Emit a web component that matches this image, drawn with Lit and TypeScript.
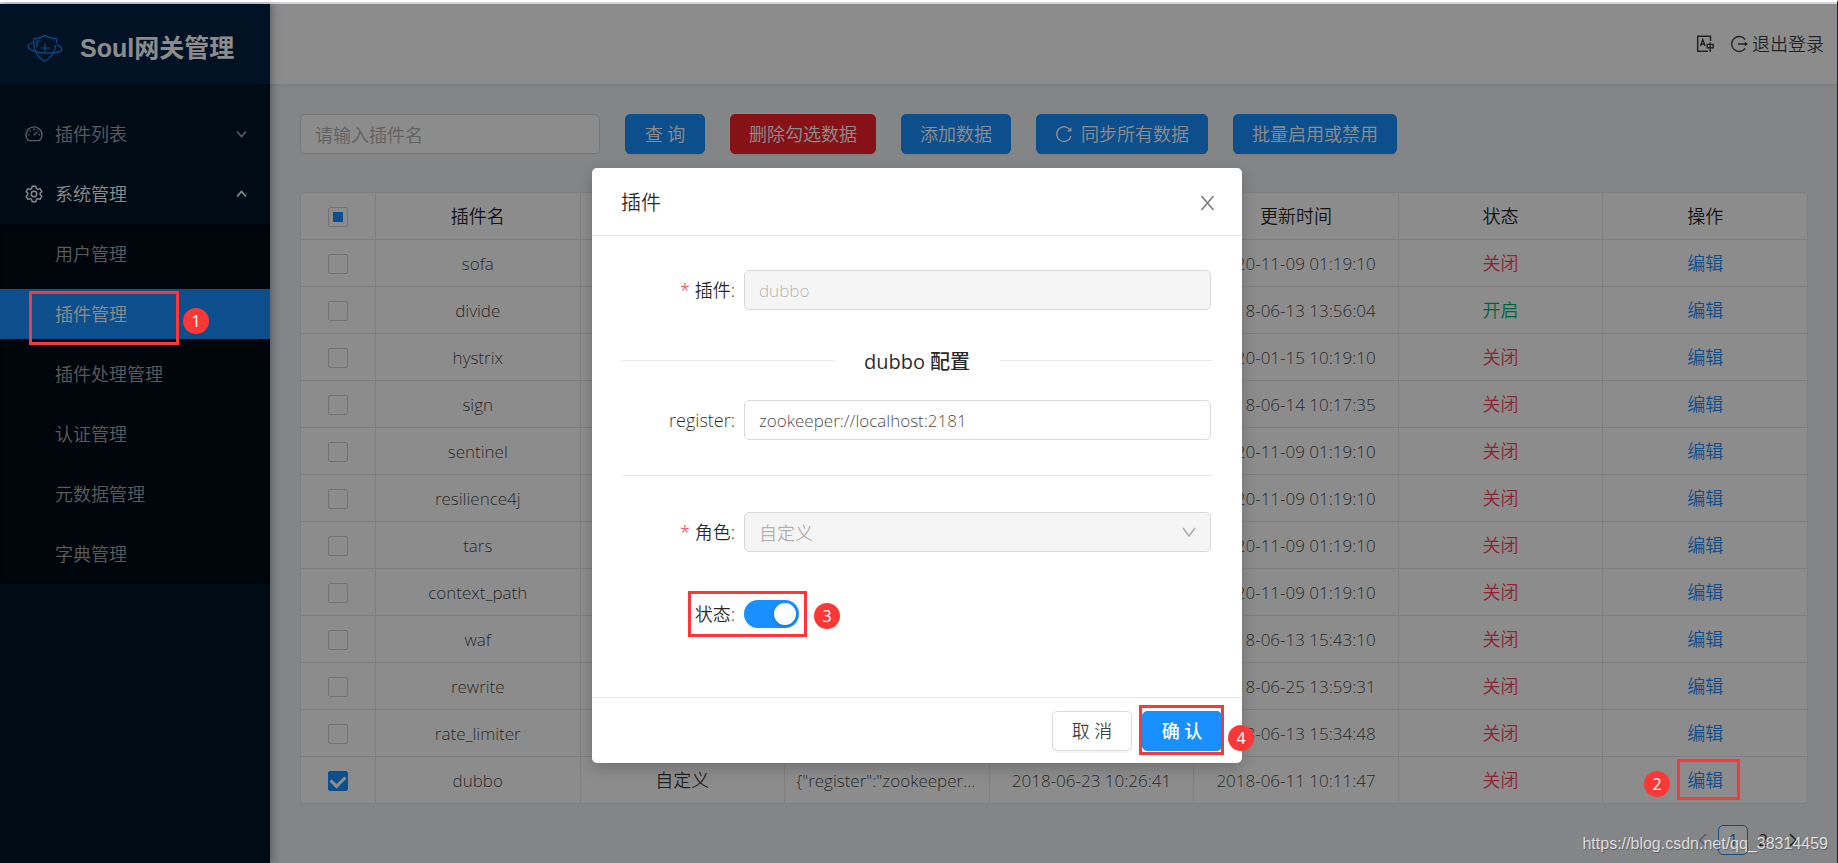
import { LitElement, html, css, svg, nothing } from "lit";
import { customElement } from "lit/decorators.js";

interface Plugin {
  name: string;
  role?: string;
  config?: string;
  created?: string;
  updated: string;
  enabled?: boolean;
  checked?: boolean;
}

const PLUGINS: Plugin[] = [
  { name: "sofa", updated: "2020-11-09 01:19:10" },
  { name: "divide", updated: "2018-06-13 13:56:04", enabled: true },
  { name: "hystrix", updated: "2020-01-15 10:19:10" },
  { name: "sign", updated: "2018-06-14 10:17:35" },
  { name: "sentinel", updated: "2020-11-09 01:19:10" },
  { name: "resilience4j", updated: "2020-11-09 01:19:10" },
  { name: "tars", updated: "2020-11-09 01:19:10" },
  { name: "context_path", updated: "2020-11-09 01:19:10" },
  { name: "waf", updated: "2018-06-13 15:43:10" },
  { name: "rewrite", updated: "2018-06-25 13:59:31" },
  { name: "rate_limiter", updated: "2018-06-13 15:34:48" },
  {
    name: "dubbo",
    role: "自定义",
    config: '{"register":"zookeeper://localhost:2181"}',
    created: "2018-06-23 10:26:41",
    updated: "2018-06-11 10:11:47",
    checked: true,
  },
];

const COLUMNS = ["插件名", "角色", "配置", "创建时间", "更新时间", "状态", "操作"];
const SYSTEM_MENU = ["用户管理", "插件管理", "插件处理管理", "认证管理", "元数据管理", "字典管理"];

const icon = (body: unknown, cls = "icon", box = "0 0 18 18") =>
  html`<svg class=${cls} viewBox=${box} fill="none" stroke="currentColor" aria-hidden="true">${body}</svg>`;

const dashboardIcon = icon(svg`
  <path stroke-width="1.4" d="M3.4 15.6A8 8 0 1 1 14.6 15.6Z"/>
  <path stroke-width="1.3" d="M8.6 10.4 12 7M9 3.6v1.8M4.6 5.4l1.2 1.2M2.9 9.8h1.7M13.4 9.8h1.7M13.2 5.2l-.6.6"/>`);
const gearIcon = icon(svg`
  <path stroke-width="1.4" stroke-linejoin="round" d="M7.2 1.2h3.6l.5 2.2 1.5.9 2.2-.7 1.8 3.1-1.7 1.5v1.6l1.7 1.5-1.8 3.1-2.2-.7-1.5.9-.5 2.2H7.2l-.5-2.2-1.5-.9-2.2.7-1.8-3.1 1.7-1.5V8.2L1.2 6.7l1.8-3.1 2.2.7 1.5-.9Z"/>
  <circle stroke-width="1.4" cx="9" cy="9" r="2.7"/>`);
const logoIcon = icon(svg`
  <path stroke-width="1.2" d="M17.500 1.200C15 3.500 11 4.500 6.800 4.800c-.3 9.700 1.500 17.200 10.900 22.400 6.700-3.800 10.400-9.600 11-16M29.600 9V4.800C25 4.500 20.500 3.500 17.500 1.200"/>
  <path stroke-width="1.2" d="M6.700 8.500C3.500 9.200 1.200 10.600 1 12.300c-.2 3.200 8 6.300 17 6.800 9.200.5 16.500-1 16.800-4 .1-1.800-2-3.300-5.200-4.500"/>
  <path stroke-width="1.2" d="M10 13V7h4M18 9.500v9M13.500 14H23"/>`, "logo-icon", "0 0 36 28");
const chevronDown = (cls: string) => icon(svg`<path stroke-width="1.6" d="m1 1.500 4.500 5L10 1.500"/>`, cls, "0 0 11 8");
const chevronUp = (cls: string) => icon(svg`<path stroke-width="1.8" d="m1 6.500 4.500-5 4.500 5"/>`, cls, "0 0 11 8");
const translateIcon = icon(svg`
  <path stroke-width="1.500" d="M14.500 6V1.200H1.700V16.300H12"/>
  <path stroke-width="1.400" d="m4.500 11 2.300-6.500L9 11M5.200 9h3.200M11.200 9.400h6v3.400h-6ZM14.200 7.500v9.500"/>`);
const logoutIcon = icon(svg`
  <path stroke-width="1.400" d="M15.200 4.600A7.500 7.500 0 1 0 15.200 13.400M8 9h8"/>
  <path fill="currentColor" stroke="none" d="m14.800 6.800 3.200 2.200-3.200 2.200Z"/>`);
const reloadIcon = icon(svg`
  <path stroke-width="1.400" d="M14.900 4.800A7.300 7.300 0 1 0 16 11.200"/>
  <path fill="currentColor" stroke="none" d="M16.500 2v4.400h-4.400Z"/>`);
const closeIcon = icon(svg`<path stroke-width="1.700" d="m1.500 1 12 14M13.500 1l-12 14"/>`, "close-icon", "0 0 15 16");
const pageArrow = (d: string) => icon(svg`<path stroke-width="1.500" d=${d}/>`, "page-arrow", "0 0 8 14");

@customElement("app-root")
export class AppRoot extends LitElement {
  static styles = css`
    :host {
      display: block;
      font-family: "Open Sans", "Noto Sans CJK SC", sans-serif;
      font-size: 17px;
      font-weight: 350;
      line-height: 26px;
      color: rgba(0, 0, 0, 0.75);
    }
    * { box-sizing: border-box; }
    button, input, select { font: inherit; color: inherit; margin: 0; }
    button { cursor: pointer; }
    a { color: #1890ff; text-decoration: none; }
    .frame {
      position: relative;
      height: 100vh;
      overflow: hidden;
      display: flex;
      border-top: 2px solid #fff;
      border-right: 1px solid #0b2545;
    }
    .app {
      flex: 1;
      min-width: 0;
      display: flex;
      border-top: 2px solid #d9d9e0;
      background: #f0f2f5;
    }
    .icon { width: 18px; height: 18px; flex: none; }

    .sidebar {
      position: relative;
      flex: none;
      width: 270px;
      background: #001529;
      box-shadow: 2px 0 8px rgba(0, 21, 41, 0.35);
      color: rgba(255, 255, 255, 0.65);
      font-size: 18px;
    }
    .brand {
      height: 80px;
      padding: 8px 26px 0 27px;
      display: flex;
      align-items: center;
      gap: 17px;
      background: #002140;
    }
    .logo-icon { width: 36px; height: 28px; color: #1890ff; flex: none; }
    .brand-name {
      margin: 0;
      color: #fff;
      font: 700 25px/40px "Liberation Sans", "Noto Sans CJK SC", sans-serif;
      white-space: nowrap;
    }
    .menu, .submenu { list-style: none; margin: 0; padding: 0; }
    .menu { padding-top: 20px; }
    .menu-item {
      display: flex;
      align-items: center;
      gap: 12px;
      height: 50px;
      margin: 5px 0;
      padding: 0 23px 0 25px;
      color: inherit;
    }
    .menu-first { margin-bottom: 10px; }
    .menu-label { flex: 1; }
    .menu-open { color: #fff; }
    .menu-chevron { width: 11px; height: 8px; }
    .submenu { background: #000c17; box-shadow: inset 0 2px 10px rgba(0, 0, 0, 0.45); padding: 1px 0; }
    .submenu .menu-item { position: relative; padding-left: 55px; margin: 10px 0; }
    .submenu li:first-child .menu-item { margin-top: 4px; }
    .submenu li:last-child .menu-item { margin-bottom: 4px; }
    .submenu .selected { background: #1890ff; color: #fff; }

    .main { flex: 1; min-width: 0; }
    .topbar {
      height: 80px;
      padding: 0 13px;
      display: flex;
      align-items: center;
      justify-content: flex-end;
      gap: 16px;
      background: #fff;
      box-shadow: 0 1px 5px rgba(0, 21, 41, 0.08);
      font-size: 18px;
    }
    .plain {
      display: flex;
      align-items: center;
      gap: 4px;
      padding: 0;
      border: 0;
      background: none;
    }
    .content { padding: 30px 29px 30px 30px; }
    .toolbar { display: flex; gap: 25px; margin-bottom: 38px; }
    .field {
      height: 40px;
      padding: 1px 14px 0;
      border: 1px solid #d9d9d9;
      border-radius: 5px;
      background: #fff;
    }
    .field::placeholder { color: #b2b2b2; opacity: 1; }
    .search { width: 300px; font-size: 18px; }
    .btn {
      display: flex;
      align-items: center;
      justify-content: center;
      gap: 8px;
      height: 40px;
      min-width: 80px;
      padding: 0 18px;
      border: 1px solid #d9d9d9;
      border-radius: 5px;
      background: #fff;
      box-shadow: 0 2px 0 rgba(0, 0, 0, 0.03);
      font-size: 18px;
      white-space: nowrap;
    }
    .primary { border-color: #1890ff; background: #1890ff; color: #fff; }
    .danger { border-color: #f5222d; background: #f5222d; color: #fff; }

    .grid {
      width: 100%;
      table-layout: fixed;
      border-collapse: separate;
      border-spacing: 0;
      border: solid #e8e8e8;
      border-width: 1px 0 0 1px;
      border-radius: 5px;
      background: #fff;
      text-align: center;
    }
    .grid th, .grid td {
      height: 47px;
      padding: 2px 9px 0;
      border: solid #e8e8e8;
      border-width: 0 1px 1px 0;
      font-weight: inherit;
      white-space: nowrap;
    }
    .grid th { padding-top: 0; color: rgba(0, 0, 0, 0.9); font-size: 18px; }
    .grid .cn { padding-top: 0; font-size: 18px; }
    .grid .pick { width: 75px; padding-top: 0; font-size: 17px; }
    .grid tr:last-child td:last-child { border-bottom-right-radius: 5px; }
    .clip { display: block; margin: 0 2px; overflow: hidden; text-overflow: ellipsis; }
    .off { color: #ff4560; }
    .on { color: #00b86b; }
    .edit { position: relative; }
    .check {
      appearance: none;
      display: inline-grid;
      place-items: center;
      width: 20px;
      height: 20px;
      border: 1px solid #d0d0d0;
      border-radius: 2px;
      background: #fff;
      vertical-align: middle;
    }
    .check:indeterminate::after { content: ""; width: 10px; height: 10px; background: #1890ff; }
    .check:checked { background: #1890ff; border-color: #1890ff; }
    .check:checked::after {
      content: "";
      width: 7px;
      height: 11px;
      margin-bottom: 2px;
      border: solid #fff;
      border-width: 0 3px 3px 0;
      transform: rotate(45deg);
    }
    .pager { display: flex; justify-content: flex-end; margin-top: 21px; }
    .page {
      display: grid;
      place-items: center;
      width: 30px;
      height: 30px;
      padding: 0;
      border: 1px solid transparent;
      border-radius: 5px;
      background: none;
      font-weight: 400;
    }
    .page-current { border-color: #1890ff; background: #fff; color: #1890ff; }
    .page-arrow { width: 8px; height: 14px; }
    .page:disabled { color: rgba(0, 0, 0, 0.3); }

    .mask {
      position: absolute;
      inset: 2px 0 0 0;
      z-index: 10;
      background: rgba(0, 0, 0, 0.45);
    }
    .modal-wrap {
      position: absolute;
      inset: 166px 3px auto 0;
      z-index: 15;
      display: flex;
      justify-content: center;
    }
    .modal {
      width: 650px;
      border-radius: 5px;
      background: #fff;
      box-shadow: 0 5px 15px rgba(0, 0, 0, 0.2);
    }
    .modal-head {
      display: flex;
      align-items: center;
      justify-content: space-between;
      height: 68px;
      padding: 2px 27px 0 29px;
      border-bottom: 1px solid #e8e8e8;
      color: rgba(0, 0, 0, 0.85);
    }
    .modal-title { margin: 0; font-size: 20px; font-weight: inherit; }
    .close-icon { width: 15px; height: 16px; color: rgba(0, 0, 0, 0.5); }
    .modal-body { display: flex; flex-direction: column; padding: 34px 30px 63px; }
    .row {
      display: grid;
      grid-template-columns: 113px 1fr;
      column-gap: 9px;
      align-items: center;
      min-height: 40px;
    }
    .row .field { width: 100%; }
    .label { text-align: right; color: rgba(0, 0, 0, 0.85); font-size: 18px; }
    .required { color: #f5222d; }
    .field:disabled { background: #f5f5f5; color: rgba(0, 0, 0, 0.3); opacity: 1; }
    .control { display: grid; align-items: center; padding-right: 1px; }
    .select { appearance: none; grid-area: 1 / 1; font-size: 18px; }
    .select-arrow { grid-area: 1 / 1; justify-self: end; width: 14px; height: 10px; margin-right: 15px; color: rgba(0, 0, 0, 0.3); }
    .section {
      display: flex;
      align-items: center;
      gap: 30px;
      margin: 35px 0 25px;
      font-size: 20px;
      line-height: 30px;
      font-weight: 500;
      color: rgba(0, 0, 0, 0.85);
    }
    .section-title { padding-top: 2px; margin-bottom: -2px; }
    .section::before, .section::after { content: ""; flex: 1; height: 1px; background: #e8e8e8; }
    .rule { width: 100%; height: 1px; margin: 35px 0 36px; border: 0; background: #e8e8e8; }
    .state { position: relative; margin-top: 42px; }
    .switch {
      appearance: none;
      display: block;
      width: 55px;
      height: 28px;
      padding: 3px;
      border-radius: 14px;
      background: #1890ff;
    }
    .switch::before {
      content: "";
      display: block;
      width: 22px;
      height: 22px;
      margin-left: auto;
      border-radius: 50%;
      background: #fff;
      box-shadow: 0 2px 5px rgba(0, 35, 11, 0.2);
    }
    .modal-foot {
      position: relative;
      display: flex;
      justify-content: flex-end;
      gap: 10px;
      padding: 13px 20px 12px;
      border-top: 1px solid #e8e8e8;
    }
    .strong { font-weight: 500; }

    .mark, .step { position: absolute; z-index: 20; pointer-events: none; }
    .mark { border: 3px solid #fb3838; }
    .step {
      display: grid;
      place-items: center;
      width: 26px;
      height: 26px;
      border-radius: 50%;
      background: #fb3838;
      color: #fff;
      font-size: 16px;
      line-height: 24px;
      font-weight: 400;
    }
    .mark-menu { left: 29px; top: 2px; width: 150px; height: 54px; }
    .step-menu { left: 183px; top: 19px; }
    .mark-edit { left: -10px; top: -9px; width: 63px; height: 41px; }
    .step-edit { left: -43px; top: 3px; }
    .mark-state { left: 66px; top: -3px; width: 119px; height: 46px; }
    .step-state { left: 192px; top: 9px; }
    .mark-ok { right: 18px; top: 7px; width: 85px; height: 50px; }
    .step-ok { right: -12px; top: 27px; }

    .watermark {
      position: absolute;
      right: 9px;
      bottom: 7px;
      z-index: 30;
      color: rgba(255, 255, 255, 0.75);
      font: 400 16px/24px "Liberation Sans", sans-serif;
      text-shadow: 1px 1px 1px rgba(0, 0, 0, 0.3);
    }
    .edge {
      position: absolute;
      right: -1px;
      top: 669px;
      z-index: 30;
      width: 1px;
      height: 21px;
      background: #fff;
    }
  `;

  private renderSidebar() {
    return html`
      <aside class="sidebar">
        <div class="brand">${logoIcon}<h1 class="brand-name">Soul网关管理</h1></div>
        <nav>
          <ul class="menu">
            <li><a class="menu-item menu-first" href="#list">${dashboardIcon}<span class="menu-label">插件列表</span>${chevronDown("menu-chevron")}</a></li>
            <li>
              <a class="menu-item menu-open" href="#system">${gearIcon}<span class="menu-label">系统管理</span>${chevronUp("menu-chevron")}</a>
              <ul class="submenu">
                ${SYSTEM_MENU.map((label, i) => html`<li>
                  <a class="menu-item ${i === 1 ? "selected" : ""}" href="#system-${i}">${label}${i === 1
                    ? html`<span class="mark mark-menu"></span><span class="step step-menu">1</span>`
                    : nothing}</a>
                </li>`)}
              </ul>
            </li>
          </ul>
        </nav>
      </aside>`;
  }

  private renderRow(p: Plugin) {
    return html`<tr>
      <td class="pick"><input class="check" type="checkbox" aria-label=${p.name} .checked=${!!p.checked}></td>
      <td>${p.name}</td>
      <td class="cn">${p.role}</td>
      <td><span class="clip">${p.config}</span></td>
      <td>${p.created}</td>
      <td>${p.updated}</td>
      <td class="cn"><span class=${p.enabled ? "on" : "off"}>${p.enabled ? "开启" : "关闭"}</span></td>
      <td class="cn"><a class="edit" href="#edit-${p.name}">编辑${p.checked
        ? html`<span class="mark mark-edit"></span><span class="step step-edit">2</span>`
        : nothing}</a></td>
    </tr>`;
  }

  private renderMain() {
    return html`
      <div class="main">
        <header class="topbar">
          <button class="plain" aria-label="语言">${translateIcon}</button>
          <button class="plain">${logoutIcon}退出登录</button>
        </header>
        <main class="content">
          <div class="toolbar">
            <input class="field search" type="text" aria-label="插件名" placeholder="请输入插件名">
            <button class="btn primary">查 询</button>
            <button class="btn danger">删除勾选数据</button>
            <button class="btn primary">添加数据</button>
            <button class="btn primary">${reloadIcon}同步所有数据</button>
            <button class="btn primary">批量启用或禁用</button>
          </div>
          <table class="grid">
            <thead>
              <tr>
                <th class="pick"><input class="check" type="checkbox" aria-label="全选" .indeterminate=${true}></th>
                ${COLUMNS.map((c) => html`<th>${c}</th>`)}
              </tr>
            </thead>
            <tbody>${PLUGINS.map((p) => this.renderRow(p))}</tbody>
          </table>
          <nav class="pager" aria-label="分页">
            <button class="page" disabled aria-label="上一页">${pageArrow("M7 1 1 7l6 6")}</button>
            <button class="page page-current">1</button>
            <button class="page">2</button>
            <button class="page" aria-label="下一页">${pageArrow("m1 1 6 6-6 6")}</button>
          </nav>
        </main>
      </div>`;
  }

  private renderModal() {
    return html`
      <div class="modal-wrap">
        <section class="modal" role="dialog" aria-labelledby="modal-title">
          <header class="modal-head">
            <h2 class="modal-title" id="modal-title">插件</h2>
            <button class="plain" aria-label="关闭">${closeIcon}</button>
          </header>
          <div class="modal-body">
            <div class="row">
              <label class="label" for="plugin"><span class="required">*</span> 插件:</label>
              <div class="control"><input class="field" id="plugin" type="text" value="dubbo" disabled></div>
            </div>
            <div class="section"><span class="section-title">dubbo 配置</span></div>
            <div class="row">
              <label class="label" for="register">register:</label>
              <div class="control"><input class="field" id="register" type="text" value="zookeeper://localhost:2181"></div>
            </div>
            <hr class="rule">
            <div class="row">
              <label class="label" for="role"><span class="required">*</span> 角色:</label>
              <div class="control">
                <select class="field select" id="role" disabled><option>自定义</option></select>
                ${icon(svg`<path stroke-width="1.500" d="m1 1 6 8 6-8"/>`, "select-arrow", "0 0 14 10")}
              </div>
            </div>
            <div class="row state">
              <label class="label" for="enabled">状态:</label>
              <input class="switch" id="enabled" type="checkbox" role="switch" checked>
              <span class="mark mark-state"></span><span class="step step-state">3</span>
            </div>
          </div>
          <footer class="modal-foot">
            <button class="btn">取 消</button>
            <button class="btn primary strong">确 认</button>
            <span class="mark mark-ok"></span><span class="step step-ok">4</span>
          </footer>
        </section>
      </div>`;
  }

  render() {
    return html`
      <div class="frame">
        <div class="app">${this.renderSidebar()}${this.renderMain()}</div>
        <div class="mask"></div>
        ${this.renderModal()}
        <span class="watermark">https://blog.csdn.net/qq_38314459</span>
        <span class="edge"></span>
      </div>`;
  }
}
